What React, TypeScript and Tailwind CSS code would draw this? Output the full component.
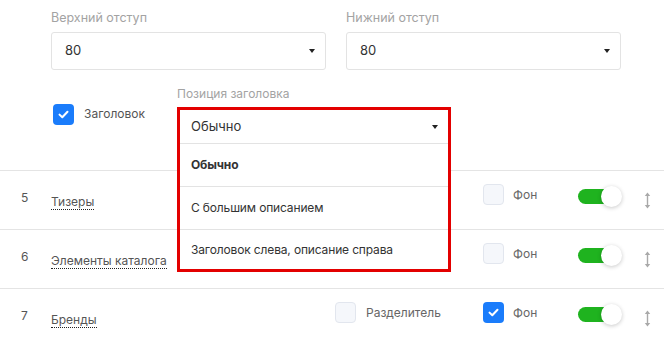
import React from "react";

type Row = {
  num: number;
  name: string;
  hasDivider: boolean;
  divider: boolean;
  background: boolean;
  enabled: boolean;
};

// rows 5 and 6 sit under the open dropdown, so only row 7 shows its divider option
const rows: Row[] = [
  { num: 5, name: "Тизеры", hasDivider: false, divider: false, background: false, enabled: true },
  { num: 6, name: "Элементы каталога", hasDivider: false, divider: false, background: false, enabled: true },
  { num: 7, name: "Бренды", hasDivider: true, divider: false, background: true, enabled: true },
];

const options = ["Обычно", "С большим описанием", "Заголовок слева, описание справа"];

const Caret = () => (
  <svg width="6" height="4" viewBox="0 0 6 4" className="shrink-0">
    <path d="M0 0h6L3 4z" fill="#222" />
  </svg>
);

const Checkbox = ({ checked }: { checked: boolean }) =>
  checked ? (
    <div className="w-[21px] h-[21px] rounded-[4px] bg-[#1a7cfb] flex items-center justify-center shrink-0">
      <svg width="11" height="9" viewBox="0 0 11 9">
        <path d="M1.5 4.6l2.8 2.7L9.5 1.8" stroke="#fff" strokeWidth="2" fill="none" strokeLinecap="round" strokeLinejoin="round" />
      </svg>
    </div>
  ) : (
    <div className="w-[21px] h-[21px] rounded-[4px] bg-[#f5f7fb] border border-[#e2e6ee] shrink-0" />
  );

const Toggle = ({ on }: { on: boolean }) => (
  <div className="relative w-[44px] h-[21px]">
    <div className={`absolute left-0 top-[3px] w-[38px] h-[15px] rounded-full ${on ? "bg-[#1fb31f]" : "bg-[#d5d8de]"}`} />
    <div
      className={`absolute top-0 w-[21px] h-[21px] rounded-full bg-white shadow-[0_1px_4px_rgba(0,0,0,0.22)] ${on ? "left-[23px]" : "left-0"}`}
    />
  </div>
);

const DragHandle = () => (
  <svg width="7" height="17" viewBox="0 0 7 17">
    <path d="M3.5 3v11" stroke="#a9a9a9" strokeWidth="1.4" />
    <path d="M0.8 4L3.5 0.5 6.2 4z" fill="#a9a9a9" />
    <path d="M0.8 13L3.5 16.5 6.2 13z" fill="#a9a9a9" />
  </svg>
);

const Select = ({ value }: { value: string }) => (
  <div className="h-[38px] w-[275px] border border-[#e3e3e3] rounded-[3px] bg-white flex items-center justify-between pl-[13px] pr-[10px] text-[13px] text-[#333]">
    <span>{value}</span>
    <Caret />
  </div>
);

export default function App() {
  return (
    <div className="w-[664px] h-[343px] overflow-hidden bg-white text-[#333]" style={{ fontFamily: "Inter, 'Noto Sans', sans-serif" }}>
      {/* block settings */}
      <div className="pl-[51px] pt-[10px] h-[171px] border-b border-[#e4e4e4]">
        <div className="flex gap-[20px]">
          <div>
            <div className="text-[12.5px] leading-[16px] text-[#a3a3a3] mb-[6px]">Верхний отступ</div>
            <Select value="80" />
          </div>
          <div>
            <div className="text-[12.5px] leading-[16px] text-[#a3a3a3] mb-[6px]">Нижний отступ</div>
            <Select value="80" />
          </div>
        </div>

        <div className="flex mt-[16px]">
          <div className="w-[126px] pt-[18px] pl-[2px] flex items-start gap-[10px]">
            <Checkbox checked />
            <span className="text-[12px] leading-[20px] text-[#555]">Заголовок</span>
          </div>
          <div>
            <div className="text-[12px] leading-[16px] text-[#a3a3a3] mb-[5px]">Позиция заголовка</div>
            <div className="relative w-[274px] h-[37px]">
              <div className="absolute left-0 top-0 w-[274px] z-10 bg-white border-[3px] border-[#e30000]">
                <div className="h-[34px] flex items-center justify-between pl-[11px] pr-[10px] text-[13px] text-[#333] border-b border-[#e3e3e3]">
                  <span>Обычно</span>
                  <Caret />
                </div>
                {options.map((opt, i) => (
                  <div
                    key={opt}
                    className={`flex items-center pl-[11px] text-[12px] tracking-[-0.15px] text-[#333] ${i < options.length - 1 ? "h-[43px] border-b border-[#e3e3e3]" : "h-[39px]"} ${i === 0 ? "font-bold" : ""}`}
                  >
                    {opt}
                  </div>
                ))}
              </div>
            </div>
          </div>
        </div>
      </div>

      {/* blocks list */}
      {rows.map((row, i) => (
        <div
          key={row.num}
          className={`flex items-start h-[59px] pt-[13px] pr-[13px] ${i < rows.length - 1 ? "border-b border-[#e4e4e4]" : ""}`}
        >
          <div className="w-[51px] pl-[21px] pt-[4px] text-[12px] leading-[20px] text-[#555]">{row.num}</div>
          <div className="flex-1 pt-[4px]">
            <span className="text-[12px] leading-[20px] text-[#555] border-b border-dotted border-[#222]">{row.name}</span>
          </div>
          <div className="w-[148px] flex items-center gap-[10px]">
            {row.hasDivider && (
              <>
                <Checkbox checked={row.divider} />
                <span className="text-[12px] text-[#666]">Разделитель</span>
              </>
            )}
          </div>
          <div className="w-[95px] flex items-center gap-[9px]">
            <Checkbox checked={row.background} />
            <span className="text-[12px] text-[#666]">Фон</span>
          </div>
          <div className="w-[66px] pt-[2px]">
            <Toggle on={row.enabled} />
          </div>
          <div className="w-[7px] pt-[8px]">
            <DragHandle />
          </div>
        </div>
      ))}
    </div>
  );
}
